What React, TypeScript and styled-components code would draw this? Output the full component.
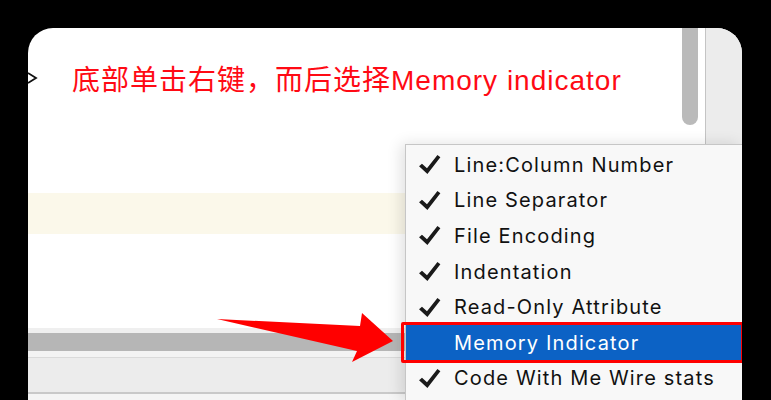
import React from "react";
import styled, { createGlobalStyle } from "styled-components";

const GlobalStyle = createGlobalStyle`
  html, body {
    margin: 0;
    padding: 0;
    background: #000;
    height: 400px;
    overflow: hidden;
  }
  #root {
    height: 400px;
  }
`;

const Stage = styled.div`
  position: relative;
  height: 400px;
  box-sizing: border-box;
  padding: 28px 29px 0 28px;
`;

const Window = styled.div`
  position: relative;
  height: 372px;
  background: #fff;
  border-radius: 25px 25px 0 0;
  overflow: hidden;
  display: flex;
  flex-direction: column;
`;

const Main = styled.div`
  display: flex;
  height: 300px;
  flex-shrink: 0;
`;

const Content = styled.div`
  flex: 1;
  display: flex;
  flex-direction: column;
`;

const NoteLine = styled.div`
  display: flex;
  align-items: center;
  height: 40px;
  margin-top: 30px;
`;

const Fold = styled.svg`
  width: 10px;
  height: 12px;
  flex-shrink: 0;
`;

const Note = styled.span`
  margin-left: 34px;
  font-family: "Liberation Sans", "Noto Sans CJK SC", sans-serif;
  font-size: 28px;
  letter-spacing: 1px;
  color: #ff0a14;
  white-space: nowrap;
`;

const CaretRow = styled.div`
  height: 41px;
  margin-top: 95px;
  background: #fbf8ea;
`;

const ScrollTrack = styled.div`
  width: 23px;
  flex-shrink: 0;
`;

const Thumb = styled.div`
  width: 16px;
  height: 97px;
  background: #bababa;
  border-radius: 0 0 8px 8px;
`;

const Divider = styled.div`
  width: 1px;
  background: #c4c4c4;
`;

const Gutter = styled.div`
  width: 36px;
  background: #ececec;
`;

const Strip = styled.div<{ $h: number; $bg: string; $line?: string }>`
  height: ${(p) => p.$h}px;
  flex-shrink: 0;
  background: ${(p) => p.$bg};
  border-bottom: ${(p) => (p.$line ? `1px solid ${p.$line}` : "none")};
`;

const StatusBar = styled.div`
  height: 34px;
  flex-shrink: 0;
  background: #ececec;
  border-bottom: 2px solid #c9c9c9;
`;

const Rest = styled.div`
  flex: 1;
  background: #f5f5f5;
`;

const Menu = styled.div`
  position: absolute;
  left: 377px;
  top: 116px;
  right: 0;
  bottom: 0;
  padding-top: 2px;
  background: #f8f8f8;
  border-left: 1px solid #c6c6c6;
  border-top: 1px solid #c6c6c6;
  box-shadow: -4px 0 14px rgba(0, 0, 0, 0.12);
`;

const Item = styled.div<{ $active?: boolean }>`
  position: relative;
  display: flex;
  align-items: center;
  height: 35.6px;
  padding-left: 12px;
  gap: 13px;
  background: ${(p) => (p.$active ? "#0c62c5" : "transparent")};
  color: ${(p) => (p.$active ? "#fff" : "#111")};
  font-family: Inter, "Liberation Sans", sans-serif;
  font-size: 20px;
  letter-spacing: 1.15px;
  white-space: nowrap;
`;

const CheckBox = styled.span`
  width: 23px;
  height: 21px;
  display: flex;
`;

const Callout = styled.div`
  position: absolute;
  inset: -3px -2px -2px -5px;
  border: 3px solid #ff0000;
  border-radius: 2px;
`;

const Arrow = styled.svg`
  position: absolute;
  left: 210px;
  top: 305px;
  width: 190px;
  height: 65px;
`;

const Check = () => (
  <svg width="23" height="21" viewBox="0 0 22 20">
    <path d="M1 11.6 L3.8 9.2 L8.6 13.6 L18.6 1 L21.4 3.1 L9 19 Z" fill="#1a1a1a" />
  </svg>
);

const items = [
  { label: "Line:Column Number", checked: true },
  { label: "Line Separator", checked: true },
  { label: "File Encoding", checked: true },
  { label: "Indentation", checked: true },
  { label: "Read-Only Attribute", checked: true },
  { label: "Memory Indicator", checked: false, active: true },
  { label: "Code With Me Wire stats", checked: true },
];

const App = () => {
  return (
    <>
      <GlobalStyle />
      <Stage>
        <Window>
          <Main>
            <Content>
              <NoteLine>
                <Fold viewBox="0 0 10 12">
                  <path d="M0 1 L8 6 L0 11" fill="none" stroke="#111" strokeWidth="1.8" />
                </Fold>
                <Note>底部单击右键，而后选择Memory indicator</Note>
              </NoteLine>
              <CaretRow />
            </Content>
            <ScrollTrack>
              <Thumb />
            </ScrollTrack>
            <Divider />
            <Gutter />
          </Main>
          <Strip $h={5} $bg="#efefef" />
          <Strip $h={18} $bg="#b6b6b6" />
          <Strip $h={6} $bg="#f3f3f3" $line="#dadada" />
          <StatusBar />
          <Rest />
          <Menu>
            {items.map((it) => (
              <Item key={it.label} $active={it.active}>
                <CheckBox>{it.checked && <Check />}</CheckBox>
                {it.label}
                {it.active && <Callout />}
              </Item>
            ))}
          </Menu>
        </Window>
        <Arrow viewBox="0 0 190 65">
          <polygon points="7,14 150,21 152,8 183,36 142,57 147,46" fill="#ff0000" />
        </Arrow>
      </Stage>
    </>
  );
};

export default App;
